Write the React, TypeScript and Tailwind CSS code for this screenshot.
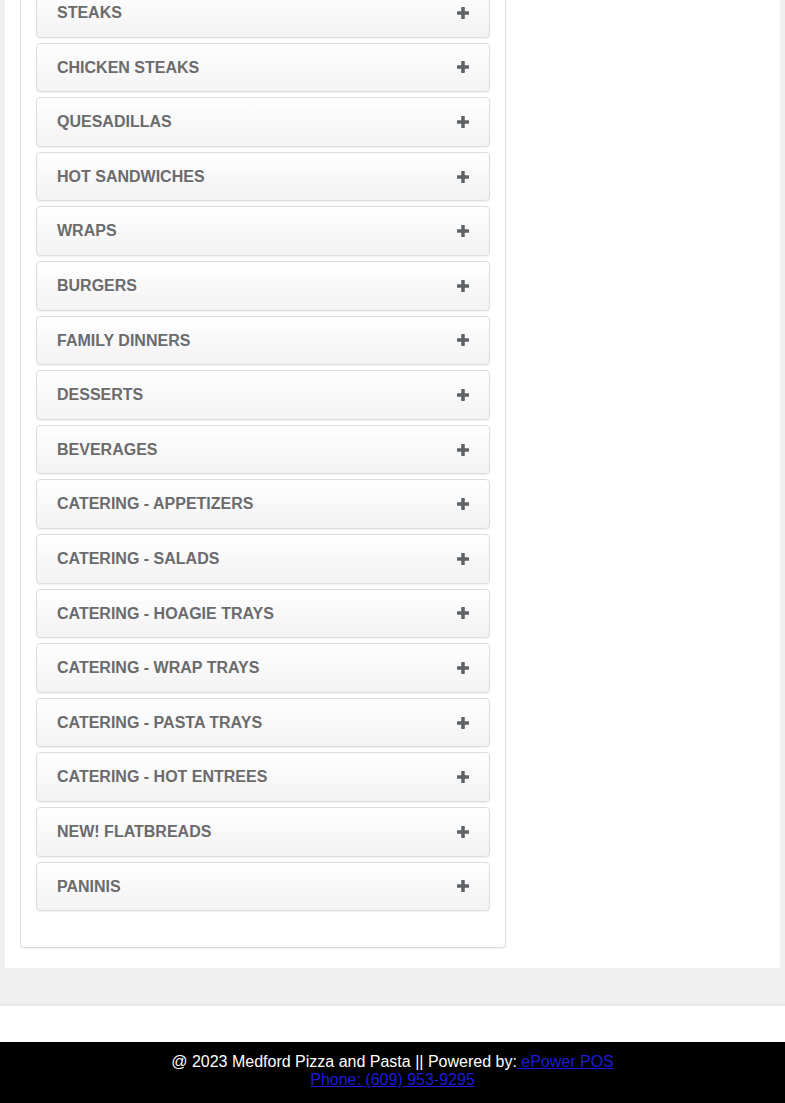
const categories = [
  'STEAKS',
  'CHICKEN STEAKS',
  'QUESADILLAS',
  'HOT SANDWICHES',
  'WRAPS',
  'BURGERS',
  'FAMILY DINNERS',
  'DESSERTS',
  'BEVERAGES',
  'CATERING - APPETIZERS',
  'CATERING - SALADS',
  'CATERING - HOAGIE TRAYS',
  'CATERING - WRAP TRAYS',
  'CATERING - PASTA TRAYS',
  'CATERING - HOT ENTREES',
  'NEW! FLATBREADS',
  'PANINIS',
];

function PlusIcon() {
  return (
    <svg width="12" height="12" viewBox="0 0 12 12" className="shrink-0">
      <rect x="4.25" y="0" width="3.5" height="12" rx="0.5" fill="#5e6367" />
      <rect x="0" y="4.25" width="12" height="3.5" rx="0.5" fill="#5e6367" />
    </svg>
  );
}

function CategoryRow({ name }: { name: string }) {
  return (
    <div className="rounded-[4px] border border-[#dcdcdc] bg-gradient-to-b from-white to-[#f4f2f2] shadow-[0_1px_1px_rgba(0,0,0,0.05)]">
      <div className="flex h-[47.6px] items-center justify-between pl-[20px] pr-[20px]">
        <span className="text-[16px] font-bold leading-[17.6px] text-[#6a6b6d]">{name}</span>
        <PlusIcon />
      </div>
    </div>
  );
}

export default function App() {
  return (
    <div className="min-h-[1103px] overflow-hidden bg-[#f0f0f0]" style={{ fontFamily: '"Liberation Sans", Arial, sans-serif' }}>
      <div className="mx-[5px] bg-white px-[15px] pb-[20px]">
        <div className="w-[486px] rounded-b-[4px] border-x border-b border-[#dddddd] px-[15px] pb-[36px] shadow-[0_1px_1px_rgba(0,0,0,0.05)]">
          <div className="-mt-[12px] flex flex-col gap-[5px]">
            {categories.map((c) => (
              <CategoryRow key={c} name={c} />
            ))}
          </div>
        </div>
      </div>
      <div className="h-[38px] border-b-[3px] border-[#e9e9e9] bg-[#f0f0f0]"></div>
      <div className="h-[36px] bg-white"></div>
      <div className="bg-black pt-[11px] pb-[15px] text-center text-[16px] leading-[18px] text-white">
        <div>
          @ 2023 Medford Pizza and Pasta || Powered by:
          <a href="#" className="text-[#1c1cd9] underline">
            {' '}ePower POS
          </a>
        </div>
        <div>
          <a href="#" className="text-[#1c1cd9] underline">
            Phone: (609) 953-9295
          </a>
        </div>
      </div>
    </div>
  );
}
